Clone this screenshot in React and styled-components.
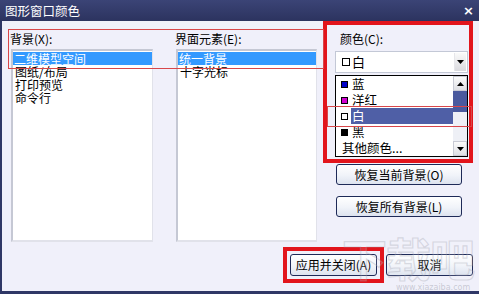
import React from "react";
import styled, { createGlobalStyle } from "styled-components";

const Global = createGlobalStyle`
  html, body { margin: 0; padding: 0; }
  body { width: 479px; height: 294px; overflow: hidden; background: #f0f0fa; }
  * { box-sizing: border-box; }
`;

const FONT = `"Noto Sans CJK SC", "Noto Sans", sans-serif`;
const NAVY = "#2f3766";

const Window = styled.div`
  position: relative;
  width: 479px;
  height: 294px;
  display: flex;
  flex-direction: column;
  font-family: ${FONT};
  font-size: 12px;
  color: #000;
  background: #f0f0fa;
`;

const TitleBar = styled.div`
  height: 21px;
  flex: none;
  display: flex;
  align-items: center;
  justify-content: space-between;
  padding: 0 5px 0 5px;
  background: linear-gradient(#3b4476, #2c335f);
  color: #fff;
  font-size: 12.5px;
  line-height: 21px;
`;

const Close = styled.span`
  font-family: "DejaVu Sans", sans-serif;
  font-weight: bold;
  font-size: 13px;
  line-height: 21px;
`;

const Body = styled.div`
  flex: 1;
  display: flex;
  flex-direction: column;
  border-left: 2px solid ${NAVY};
  border-bottom: 3px solid ${NAVY};
`;

const MainRow = styled.div`
  display: flex;
  align-items: flex-start;
  height: 221px;
`;

const ListCol = styled.div`
  display: flex;
  flex-direction: column;
  width: ${(p) => p.$w}px;
  margin-left: ${(p) => p.$ml}px;
  padding-top: 11px;
`;

const Label = styled.div`
  height: 14px;
  line-height: 14px;
  margin-left: ${(p) => p.$ml || -1}px;
  white-space: nowrap;
`;

const ListBox = styled.div`
  margin-top: 3px;
  height: 193px;
  background: #fff;
  border-top: 2px solid #c5c8d4;
  border-left: 2px solid #c5c8d4;
  border-right: 1px solid #e1e2ea;
  border-bottom: 2px solid #e1e2ea;
  padding-top: 1px;
`;

const ListItem = styled.div`
  height: 13px;
  line-height: 13px;
  padding-left: ${(p) => (p.$sel ? 1 : 2)}px;
  white-space: nowrap;
  background: ${(p) => (p.$sel ? "#3399ff" : "transparent")};
  color: ${(p) => (p.$sel ? "#fff" : "#000")};
`;

const RightCol = styled.div`
  display: flex;
  flex-direction: column;
  width: 150px;
  margin-left: 6px;
`;

const RedBox = styled.div`
  height: 142px;
  border: 4px solid #e2151c;
  padding: 7px 1px 0 8px;
  display: flex;
  flex-direction: column;
`;

const Combo = styled.div`
  margin-top: 5px;
  width: 133px;
  height: 22px;
  background: #fff;
  border: 1px solid #c3c8d6;
  display: flex;
  align-items: center;
  padding-left: 6px;
  position: relative;
`;

const ComboText = styled.span`
  flex: 1;
  margin-left: 2px;
  line-height: 14px;
  font-size: 13px;
`;

const ArrowBtn = styled.div`
  width: 12px;
  height: 18px;
  margin-right: 1px;
  background: linear-gradient(#fafafa, #dadadf);
  border-left: 1px solid #e6e6ea;
  display: flex;
  align-items: center;
  justify-content: center;
`;

const Swatch = styled.span`
  width: ${(p) => p.$s || 7}px;
  height: ${(p) => p.$s || 7}px;
  flex: none;
  border: 1px solid #000;
  background: ${(p) => p.$c};
`;

const Dropdown = styled.div`
  margin-top: 2px;
  width: 133px;
  height: 82px;
  border: 1px solid #000;
  background: #fff;
  display: flex;
`;

const DropItems = styled.div`
  flex: 1;
  display: flex;
  flex-direction: column;
`;

const DropItem = styled.div`
  height: 16px;
  display: flex;
  align-items: center;
  padding-left: 5px;
`;

const DropText = styled.span`
  flex: 1;
  height: 16px;
  line-height: 16px;
  font-size: 12.5px;
  margin-left: ${(p) => (p.$noSwatch ? 0 : 3)}px;
  padding-left: 1px;
  white-space: nowrap;
  background: ${(p) => (p.$sel ? "#4f5fa6" : "transparent")};
  color: ${(p) => (p.$sel ? "#fff" : "#000")};
`;

const ScrollBar = styled.div`
  width: 14px;
  display: flex;
  flex-direction: column;
  background: #eef0f6;
`;

const ScrollBtn = styled.div`
  height: 15px;
  flex: none;
  background: linear-gradient(#fbfbfb, #dedfe4);
  border: 1px solid #c8cad4;
  display: flex;
  align-items: center;
  justify-content: center;
`;

const Thumb = styled.div`
  height: 21px;
  flex: none;
  background: #4a5a9e;
`;

const Track = styled.div`
  flex: 1;
`;

const Button = styled.button`
  font-family: ${FONT};
  font-size: 12px;
  color: #000;
  width: ${(p) => p.$w}px;
  height: ${(p) => p.$h || 21}px;
  margin: ${(p) => p.$m || 0};
  padding: 0;
  border: 1px solid #1e2a58;
  border-radius: 3px;
  background: linear-gradient(#ffffff, #f0f3f9 55%, #dde3ef);
  line-height: 18px;
  white-space: nowrap;
`;

const BottomRow = styled.div`
  display: flex;
  justify-content: flex-end;
  align-items: flex-start;
  padding-right: 6px;
  margin-top: 5px;
`;

const RedWrap = styled.div`
  border: 4px solid #e2151c;
  padding: 3px;
  display: flex;
`;

const Annot = styled.div`
  position: absolute;
  left: ${(p) => p.$x}px;
  top: ${(p) => p.$y}px;
  width: ${(p) => p.$w}px;
  height: ${(p) => p.$h}px;
  border: 1px solid #d8474a;
  pointer-events: none;
`;

const Watermark = styled.div`
  position: absolute;
  left: 342px;
  top: 232px;
  font-family: ${FONT};
  font-size: 45px;
  font-weight: bold;
  letter-spacing: -1px;
  line-height: 52px;
  color: rgba(255, 255, 255, 0.15);
  -webkit-text-stroke: 1.2px rgba(160, 162, 175, 0.35);
  pointer-events: none;
  white-space: nowrap;
`;

const WatermarkUrl = styled.div`
  position: absolute;
  left: 396px;
  top: 283px;
  font-family: "DejaVu Sans", sans-serif;
  font-size: 8px;
  color: rgba(150, 152, 165, 0.45);
  pointer-events: none;
`;

const Tri = ({ up }) => (
  <svg width="7" height="4" viewBox="0 0 7 4">
    <path d={up ? "M0 4 L3.5 0 L7 4 Z" : "M0 0 L7 0 L3.5 4 Z"} fill="#000" />
  </svg>
);

const colors = [
  { name: "蓝", c: "#0000c8" },
  { name: "洋红", c: "#d000d0" },
  { name: "白", c: "#fff", sel: true },
  { name: "黑", c: "#000" },
  { name: "其他颜色...", c: null },
];

export default function App() {
  return (
    <Window>
      <Global />
      <TitleBar>
        <span>图形窗口颜色</span>
        <Close>×</Close>
      </TitleBar>
      <Body>
        <MainRow>
          <ListCol $w={142} $ml={9}>
            <Label>背景(X):</Label>
            <ListBox>
              <ListItem $sel>二维模型空间</ListItem>
              <ListItem>图纸/布局</ListItem>
              <ListItem>打印预览</ListItem>
              <ListItem>命令行</ListItem>
            </ListBox>
          </ListCol>
          <ListCol $w={141} $ml={23}>
            <Label>界面元素(E):</Label>
            <ListBox>
              <ListItem $sel>统一背景</ListItem>
              <ListItem>十字光标</ListItem>
            </ListBox>
          </ListCol>
          <RightCol>
            <RedBox>
              <Label $ml={5}>颜色(C):</Label>
              <Combo>
                <Swatch $c="#fff" $s={8} />
                <ComboText>白</ComboText>
                <ArrowBtn>
                  <Tri />
                </ArrowBtn>
              </Combo>
              <Dropdown>
                <DropItems>
                  {colors.map((it) => (
                    <DropItem key={it.name}>
                      {it.c && <Swatch $c={it.c} />}
                      <DropText $sel={it.sel} $noSwatch={!it.c}>
                        {it.name}
                      </DropText>
                    </DropItem>
                  ))}
                </DropItems>
                <ScrollBar>
                  <ScrollBtn>
                    <Tri up />
                  </ScrollBtn>
                  <Thumb />
                  <Track />
                  <ScrollBtn>
                    <Tri />
                  </ScrollBtn>
                </ScrollBar>
              </Dropdown>
            </RedBox>
            <Button $w={126} $m="1px 0 0 13px">恢复当前背景(O)</Button>
            <Button $w={126} $m="11px 0 0 13px">恢复所有背景(L)</Button>
          </RightCol>
        </MainRow>
        <BottomRow>
          <RedWrap>
            <Button $w={87} $h={22}>应用并关闭(A)</Button>
          </RedWrap>
          <Button $w={87} $h={22} $m="7px 0 0 2px">取消</Button>
        </BottomRow>
      </Body>
      <Annot $x={8} $y={29} $w={316} $h={40} />
      <Annot $x={327} $y={106} $w={145} $h={21} />
      <Watermark>下载吧</Watermark>
      <WatermarkUrl>www.xiazaiba.com</WatermarkUrl>
    </Window>
  );
}
